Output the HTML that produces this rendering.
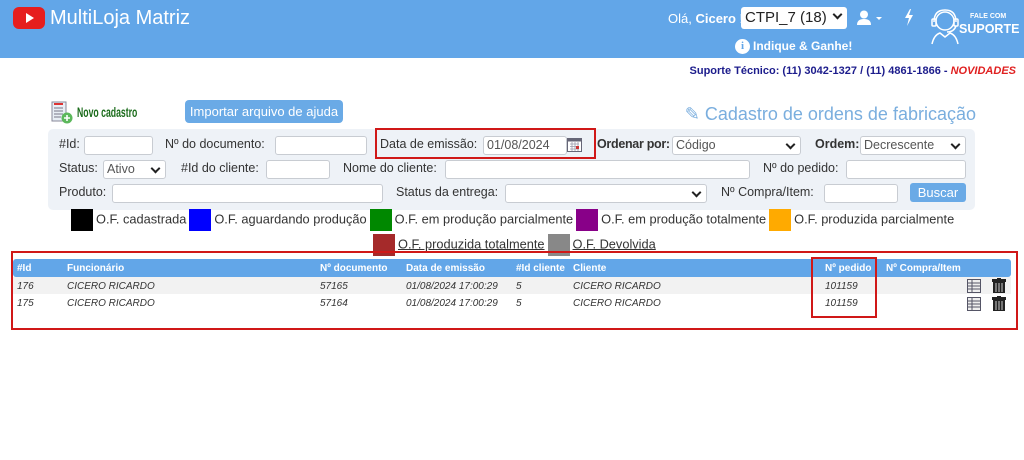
<!DOCTYPE html>
<html><head><meta charset="utf-8"><style>
*{margin:0;padding:0;box-sizing:border-box}
body{width:1024px;height:460px;background:#fff;font-family:"Liberation Sans",sans-serif;position:relative;overflow:hidden;color:#333}
.a{position:absolute;white-space:nowrap}
.hdr{position:absolute;left:0;top:0;width:1024px;height:58px;background:#62a6e8}
.inp{position:absolute;height:19px;background:#fff;border:1px solid #c8ccd2;border-radius:3px;font-size:12.5px;color:#555;padding-left:3px;line-height:17px}
.lbl{position:absolute;font-size:12.5px;color:#333;white-space:nowrap}
.sel:after{content:"";position:absolute;right:6px;top:4px;width:5px;height:5px;border-right:2px solid #222;border-bottom:2px solid #222;transform:rotate(45deg)}
.sq{display:inline-block;width:22px;height:22px;vertical-align:middle;margin:0 3px 0 3px}
.leg{font-size:12.8px;color:#333}
.th{position:absolute;font-size:10px;color:#fff;font-weight:bold;top:263px}
.td{position:absolute;font-size:10px;font-style:italic;color:#333}
</style></head><body>
<div class="hdr"></div>
<div class="a" style="left:13px;top:7px;width:32px;height:22px;background:#e61e1e;border-radius:6px"></div>
<div class="a" style="left:26px;top:13px;width:0;height:0;border-left:8px solid #fff;border-top:5px solid transparent;border-bottom:5px solid transparent"></div>
<div class="a" style="left:50px;top:7px;font-size:20px;color:#fff">MultiLoja Matriz</div>
<div class="a" style="left:668px;top:11px;font-size:13px;color:#fff">Olá, <b>Cicero</b> !</div>
<div class="a sel" style="left:741px;top:7px;width:106px;height:22px;background:#fff;border-radius:3px;font-size:15px;color:#222;padding:2px 0 0 4px">CTPI_7 (18)</div>
<svg class="a" style="left:856px;top:10px" width="30" height="16"><circle cx="8" cy="4.5" r="4" fill="#fff"/><path d="M1 15 Q1 9 8 9 Q15 9 15 15Z" fill="#fff"/><path d="M20 7 L26 7 L23 10Z" fill="#fff"/></svg>
<svg class="a" style="left:903px;top:9px" width="12" height="17"><path d="M7 0 L2 9 L6 9 L4 17 L10 6 L6 6 L8 0Z" fill="#fff"/></svg>
<svg class="a" style="left:928px;top:7px" width="36" height="38" fill="none" stroke="#fff" stroke-width="1.5"><circle cx="17" cy="14" r="9"/><path d="M6 15 Q6 3 17 3 Q28 3 28 15"/><rect x="4" y="12" width="4" height="7" rx="1"/><rect x="26" y="12" width="4" height="7" rx="1"/><path d="M28 19 Q26 25 19 25"/><path d="M4 37 Q6 28 12 26 L17 30 L22 26 Q28 28 30 37"/></svg>
<div class="a" style="left:970px;top:13px;font-size:7px;color:#fff;font-weight:bold">FALE COM</div>
<div class="a" style="left:959px;top:22px;font-size:12.5px;color:#fff;font-weight:bold">SUPORTE</div>
<div class="a" style="left:735px;top:39px;width:15px;height:15px;border-radius:50%;background:#fff;color:#62a6e8;font-size:11px;font-weight:bold;text-align:center;line-height:15px;font-family:'Liberation Serif',serif">i</div>
<div class="a" style="left:753px;top:39px;font-size:12px;color:#fff;font-weight:bold">Indique &amp; Ganhe!</div>
<div class="a" style="right:8px;top:65px;font-size:11px;color:#1c1c8c;font-weight:bold">Suporte Técnico: (11) 3042-1327 / (11) 4861-1866 - <i style="color:#e02020">NOVIDADES</i></div>
<svg class="a" style="left:51px;top:101px" width="22" height="23"><rect x="1" y="1" width="14" height="19" fill="#e8eef5" stroke="#889" stroke-width="1"/><rect x="3" y="2" width="9" height="2" fill="#d33"/><path d="M3 7h9M3 10h9M3 13h9M3 16h7" stroke="#778"/><circle cx="16" cy="17" r="5.5" fill="#5cb85c"/><path d="M16 14v6M13 17h6" stroke="#fff" stroke-width="1.6"/></svg>
<div class="a" style="left:77px;top:104px;font-size:14px;color:#1a6b1a;font-weight:bold;transform:scaleX(0.62);transform-origin:0 0">Novo cadastro</div>
<div class="a" style="left:185px;top:100px;width:158px;height:23px;background:#6aaae6;border-radius:4px;color:#fff;font-size:13px;text-align:center;line-height:23px">Importar arquivo de ajuda</div>
<div class="a" style="right:48px;top:104px;font-size:18px;color:#7aaede">&#9998;&#xFE0E; Cadastro de ordens de fabricação</div>
<div class="a" style="left:48px;top:129px;width:927px;height:81px;background:#eef2f7;border-radius:5px"></div>
<div class="lbl" style="left:59px;top:137px">#Id:</div><div class="inp" style="left:84px;top:136px;width:69px"></div>
<div class="lbl" style="left:165px;top:137px">Nº do documento:</div><div class="inp" style="left:275px;top:136px;width:92px"></div>
<div class="lbl" style="left:380px;top:137px">Data de emissão:</div><div class="inp" style="left:483px;top:136px;width:84px">01/08/2024</div>
<svg class="a" style="left:567px;top:138px" width="15" height="14"><rect x="0.5" y="0.5" width="14" height="13" fill="#fff" stroke="#667"/><rect x="0.5" y="0.5" width="14" height="3" fill="#667"/><path d="M3 6h9M3 8.5h9M3 11h9M5 4v9M8 4v9M11 4v9" stroke="#99a" stroke-width=".8"/><rect x="9" y="8" width="3" height="3" fill="#c33"/></svg>
<div class="lbl" style="left:597px;top:137px;font-weight:bold;letter-spacing:-0.3px">Ordenar por:</div><div class="inp sel" style="left:672px;top:136px;width:129px">Código</div>
<div class="lbl" style="left:815px;top:137px;font-weight:bold">Ordem:</div><div class="inp sel" style="left:860px;top:136px;width:106px">Decrescente</div>
<div class="lbl" style="left:59px;top:161px">Status:</div><div class="inp sel" style="left:103px;top:160px;width:63px">Ativo</div>
<div class="lbl" style="left:181px;top:161px">#Id do cliente:</div><div class="inp" style="left:266px;top:160px;width:64px"></div>
<div class="lbl" style="left:343px;top:161px">Nome do cliente:</div><div class="inp" style="left:445px;top:160px;width:305px"></div>
<div class="lbl" style="left:763px;top:161px">Nº do pedido:</div><div class="inp" style="left:846px;top:160px;width:120px"></div>
<div class="lbl" style="left:59px;top:185px">Produto:</div><div class="inp" style="left:112px;top:184px;width:271px"></div>
<div class="lbl" style="left:396px;top:185px">Status da entrega:</div><div class="inp sel" style="left:505px;top:184px;width:202px"></div>
<div class="lbl" style="left:721px;top:185px">Nº Compra/Item:</div><div class="inp" style="left:824px;top:184px;width:74px"></div>
<div class="a" style="left:910px;top:183px;width:56px;height:19px;background:#6aaae6;border-radius:3px;color:#fff;font-size:13px;text-align:center;line-height:19px">Buscar</div>
<div class="a leg" style="left:68px;top:209px"><span class="sq" style="background:#000"></span>O.F. cadastrada<span class="sq" style="background:#00f"></span>O.F. aguardando produção<span class="sq" style="background:#080"></span>O.F. em produção parcialmente<span class="sq" style="background:#808"></span>O.F. em produção totalmente<span class="sq" style="background:#fa0"></span>O.F. produzida parcialmente</div>
<div class="a leg" style="left:370px;top:234px"><span class="sq" style="background:#a52a2a"></span><u>O.F. produzida totalmente</u><span class="sq" style="background:#888"></span><u>O.F. Devolvida</u></div>
<div class="a" style="left:13px;top:259px;width:998px;height:18px;background:#62a6e8;border-radius:3px"></div>
<div class="a" style="left:13px;top:277px;width:998px;height:17px;background:#f2f2f2"></div>
<div class="th" style="left:17px">#Id</div><div class="th" style="left:67px">Funcionário</div><div class="th" style="left:320px">Nº documento</div><div class="th" style="left:406px">Data de emissão</div><div class="th" style="left:516px">#Id cliente</div><div class="th" style="left:573px">Cliente</div><div class="th" style="left:825px">Nº pedido</div><div class="th" style="left:886px">Nº Compra/Item</div>
<div class="td" style="left:17px;top:281px">176</div><div class="td" style="left:67px;top:281px">CICERO RICARDO</div><div class="td" style="left:320px;top:281px">57165</div><div class="td" style="left:406px;top:281px">01/08/2024 17:00:29</div><div class="td" style="left:516px;top:281px">5</div><div class="td" style="left:573px;top:281px">CICERO RICARDO</div><div class="td" style="left:825px;top:281px">101159</div>
<div class="td" style="left:17px;top:298px">175</div><div class="td" style="left:67px;top:298px">CICERO RICARDO</div><div class="td" style="left:320px;top:298px">57164</div><div class="td" style="left:406px;top:298px">01/08/2024 17:00:29</div><div class="td" style="left:516px;top:298px">5</div><div class="td" style="left:573px;top:298px">CICERO RICARDO</div><div class="td" style="left:825px;top:298px">101159</div>
<svg class="a" style="left:967px;top:279px" width="14" height="32"><g id="g"><rect x="0.5" y="0.5" width="13" height="13" fill="#eee" stroke="#556"/><path d="M1 4h12M1 7h12M1 10h12M5 1v12" stroke="#556"/></g><use href="#g" y="18"/></svg>
<svg class="a" style="left:991px;top:278px" width="16" height="34"><g id="t"><rect x="1" y="1" width="14" height="3" fill="#222"/><rect x="6" y="0" width="4" height="2" fill="#222"/><rect x="2" y="4" width="12" height="11" fill="#222"/><path d="M5 5v9M8 5v9M11 5v9" stroke="#ccc" stroke-width="1"/></g><use href="#t" y="18"/></svg>
<div class="a" style="left:375px;top:128px;width:221px;height:31px;border:2px solid #d01818"></div>
<div class="a" style="left:11px;top:251px;width:1007px;height:79px;border:2px solid #d01818"></div>
<div class="a" style="left:811px;top:257px;width:66px;height:61px;border:2px solid #d01818"></div>
</body></html>
